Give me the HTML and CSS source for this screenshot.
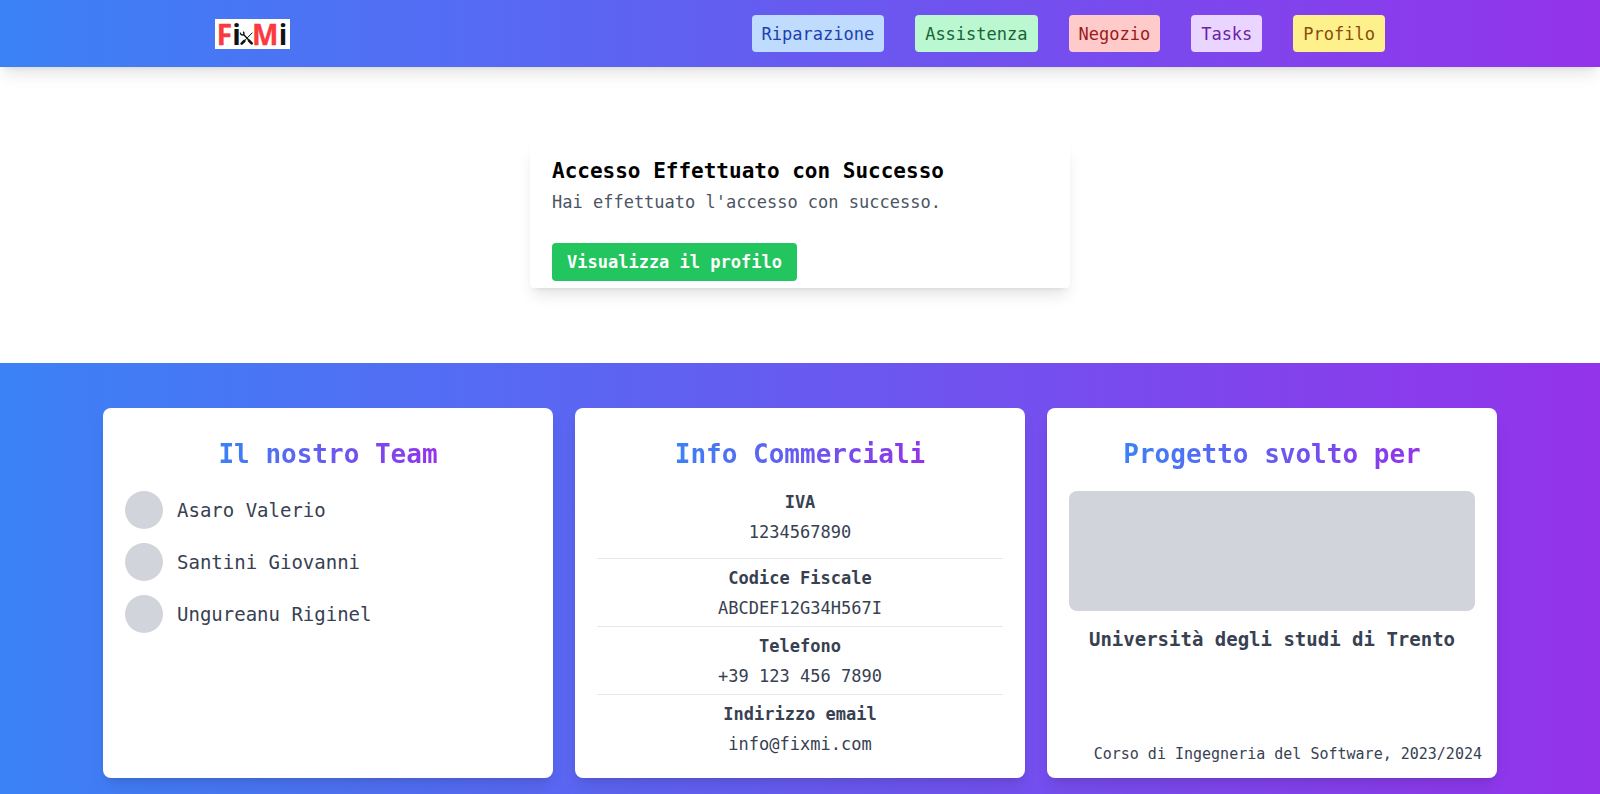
FILE: index.html
```html
<!DOCTYPE html>
<html lang="it">
<head>
<meta charset="utf-8">
<meta name="viewport" content="width=device-width, initial-scale=1">
<title>FixMi</title>
<link rel="stylesheet" href="styles.css">
</head>
<body>
<header class="site-header">
  <div class="header-inner">
    <a class="logo" href="#" aria-label="FixMi">
      <svg class="logo-art" viewBox="0 0 225 90" aria-hidden="true">
        <rect width="225" height="90" fill="#fff"/>
        <text class="logo-red" x="5" y="77">F</text>
        <text class="logo-black" x="52" y="77">i</text>
        <text class="logo-red" x="111" y="77">M</text>
        <text class="logo-black" x="191" y="77">i</text>
        <g fill="none" stroke="#111">
          <path d="M85 46L104 66" stroke-width="4"/>
          <path d="M102 65l8 8" stroke-width="8" stroke-linecap="round"/>
          <path d="M76 41q1 8 8 7q5-3 1-10" stroke-width="4"/>
          <path d="M112 41L84 70" stroke-width="3"/>
          <path d="M88 66l-8 8" stroke-width="8" stroke-linecap="round"/>
        </g>
      </svg>
    </a>
    <nav class="nav">
      <a class="pill pill-blue" href="#">Riparazione</a>
      <a class="pill pill-green" href="#">Assistenza</a>
      <a class="pill pill-red" href="#">Negozio</a>
      <a class="pill pill-purple" href="#">Tasks</a>
      <a class="pill pill-yellow" href="#">Profilo</a>
    </nav>
  </div>
</header>
<main class="main">
  <section class="notice">
    <h1 class="notice-title">Accesso Effettuato con Successo</h1>
    <p class="notice-text">Hai effettuato l'accesso con successo.</p>
    <button class="notice-button" type="button">Visualizza il profilo</button>
  </section>
</main>
<footer class="site-footer">
  <div class="cards">
    <section class="card">
      <h2 class="card-title"><span class="gradient-text">Il nostro Team</span></h2>
      <ul class="team">
        <li class="member"><span class="avatar"></span>Asaro Valerio</li>
        <li class="member"><span class="avatar"></span>Santini Giovanni</li>
        <li class="member"><span class="avatar"></span>Ungureanu Riginel</li>
      </ul>
    </section>
    <section class="card">
      <h2 class="card-title"><span class="gradient-text">Info Commerciali</span></h2>
      <dl class="info">
        <div class="info-row"><dt>IVA</dt><dd>1234567890</dd></div>
        <div class="info-row"><dt>Codice Fiscale</dt><dd>ABCDEF12G34H567I</dd></div>
        <div class="info-row"><dt>Telefono</dt><dd>+39 123 456 7890</dd></div>
        <div class="info-row"><dt>Indirizzo email</dt><dd>info@fixmi.com</dd></div>
      </dl>
    </section>
    <section class="card">
      <h2 class="card-title"><span class="gradient-text">Progetto svolto per</span></h2>
      <div class="placeholder"></div>
      <p class="school">Università degli studi di Trento</p>
      <p class="course">Corso di Ingegneria del Software, 2023/2024</p>
    </section>
  </div>
</footer>
</body>
</html>
```
FILE: styles.css
```css
* { box-sizing: border-box; }

body, h1, h2, p, ul, dl, dd { margin: 0; padding: 0; }

body {
  background: #fff;
  color: #374151;
  font: 17px/22px "DejaVu Sans Mono", "Liberation Mono", monospace;
}

.site-header,
.site-footer { background: linear-gradient(to right, #3b82f6, #9333ea); }

.site-header {
  padding: 15px 24px;
  box-shadow: 0 10px 15px -3px rgba(0, 0, 0, 0.1), 0 4px 6px -4px rgba(0, 0, 0, 0.1);
}

.header-inner {
  display: flex;
  align-items: center;
  justify-content: space-between;
  max-width: 1170px;
  margin: 0 auto;
}

.logo, .logo-art { display: block; }
.logo-art { width: 75px; height: 30px; overflow: visible; }
.logo-art text { font: 700 84px "Open Sans", sans-serif; }
.logo-red { fill: #f93a3f; stroke: #f93a3f; stroke-width: 1px; }
.logo-black { fill: #111; }

.nav { display: flex; gap: 31px; }

.pill {
  padding: 8px 10px 7px;
  border-radius: 4px;
  text-decoration: none;
}
.pill-blue { background: #bfdbfe; color: #1e40af; }
.pill-green { background: #bbf7d0; color: #166534; }
.pill-red { background: #fecaca; color: #991b1b; }
.pill-purple { background: #e9d5ff; color: #6b21a8; }
.pill-yellow { background: #fef08a; color: #854d0e; }

.main { padding: 75px 24px; }

.notice {
  max-width: 540px;
  margin: 0 auto;
  padding: 15px 22px 7px;
  border-radius: 4px;
  box-shadow: 0 10px 15px -3px rgba(0, 0, 0, 0.1), 0 4px 6px -4px rgba(0, 0, 0, 0.1);
}
.notice-title {
  margin-bottom: 6px;
  color: #000;
  font-size: 21px;
  line-height: 28px;
}
.notice-text { margin-bottom: 30px; color: #4b5563; }
.notice-button {
  padding: 8px 15px;
  border: 0;
  border-radius: 4px;
  background: #22c55e;
  color: #fff;
  font: inherit;
  font-weight: 700;
}

.site-footer { padding: 45px 24px 16px; }

.cards {
  display: grid;
  grid-template-columns: repeat(3, 1fr);
  gap: 22px;
  max-width: 1394px;
  margin: 0 auto;
}

.card {
  display: flex;
  flex-direction: column;
  padding: 22px;
  border-radius: 8px;
  background: #fff;
  box-shadow: 0 10px 15px -3px rgba(0, 0, 0, 0.1), 0 4px 6px -4px rgba(0, 0, 0, 0.1);
}
.card-title {
  margin-bottom: 13px;
  font-size: 26px;
  line-height: 48px;
  text-align: center;
}
.gradient-text {
  background: linear-gradient(to right, #3b82f6, #9333ea);
  -webkit-background-clip: text;
  background-clip: text;
  color: transparent;
}

.team { display: grid; gap: 14px; list-style: none; }
.member {
  display: flex;
  align-items: center;
  gap: 14px;
  font-size: 19px;
}
.avatar {
  width: 38px;
  height: 38px;
  border-radius: 50%;
  background: #d1d5db;
}

.info { text-align: center; }
.info-row {
  display: grid;
  gap: 8px;
  padding: 8px 0 7px;
  border-bottom: 1px solid #e5e7eb;
}
.info-row:first-child { padding: 0 0 15px; }
.info-row:last-child { padding-bottom: 1px; border-bottom: 0; }
.info-row dt { font-weight: 700; }

.placeholder {
  height: 120px;
  border-radius: 8px;
  background: #d1d5db;
}
.school {
  margin-top: 17px;
  font-size: 19px;
  font-weight: 700;
  text-align: center;
}
.course {
  margin: auto -7px -9px;
  font-size: 15px;
  text-align: right;
}
```
